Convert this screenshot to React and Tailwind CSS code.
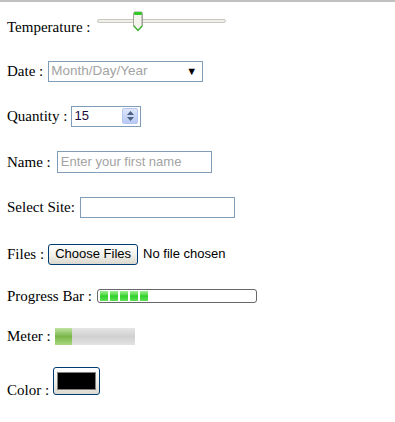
import React from "react";

const serif = { fontFamily: '"Liberation Serif", "Times New Roman", serif' };
const sans = { fontFamily: '"Liberation Sans", Arial, sans-serif' };

function Slider() {
  return (
    <div className="relative w-[129px] h-[21px] ml-[6px] mb-[12px]">
      <div className="absolute left-0 right-0 top-[8px] h-[4px] rounded-[2px] border border-[#c9c8bf] bg-[#f0efe9]" />
      <svg className="absolute left-[35px] top-0" width="12" height="21" viewBox="0 0 12 21">
        <path d="M1.5 2.5 Q1.5 1 3 1 H9 Q10.5 1 10.5 2.5 V14.5 L6 19.5 L1.5 14.5 Z" fill="#f4f3ee" stroke="#a2a39a" />
        <rect x="2" y="1" width="8" height="3" fill="#35c72a" rx="1" />
        <path d="M1.5 14.5 L6 19.5 L10.5 14.5" fill="none" stroke="#3cb12f" strokeWidth="1.3" />
        <rect x="9" y="4" width="1" height="10" fill="#c8c7bd" />
      </svg>
    </div>
  );
}

function Row({ className = "", children }) {
  return <div className={"flex items-center h-[22px] " + className}>{children}</div>;
}

export default function App() {
  return (
    <div className="w-[395px] h-[422px] bg-white border-t-2 border-[#c0c0c0] text-[15px] text-black" style={serif}>
      <div className="pl-[7px] flex flex-col">
        <Row className="mt-[14px]">
          <span>Temperature :</span>
          <Slider />
        </Row>

        <Row className="mt-[22px]">
          <span>Date :</span>
          <div
            className="ml-[5px] w-[155px] h-[21px] border border-[#7f9db9] flex items-center pl-[2px] pr-[5px] justify-between text-[13.5px] text-[#a3a3a3]"
            style={sans}
          >
            <span>Month/Day/Year</span>
            <span className="text-black text-[11px]">▼</span>
          </div>
        </Row>

        <Row className="mt-[23px]">
          <span>Quantity :</span>
          <div
            className="ml-[4px] w-[70px] h-[21px] border border-[#7f9db9] flex items-center pl-[2px] pr-[2px] justify-between text-[13px] text-[#1a0a3a]"
            style={sans}
          >
            <span>15</span>
            <div className="w-[16px] h-[16px] rounded-[2px] border border-[#b5c6ef] bg-gradient-to-b from-[#dde6fb] to-[#b8c9f3] flex flex-col items-center justify-center gap-[2px]">
              <svg width="7" height="4" viewBox="0 0 7 4"><path d="M0 4 L3.5 0 L7 4 Z" fill="#4d6185" /></svg>
              <svg width="7" height="4" viewBox="0 0 7 4"><path d="M0 0 L3.5 4 L7 0 Z" fill="#4d6185" /></svg>
            </div>
          </div>
        </Row>

        <Row className="mt-[24px]">
          <span>Name :</span>
          <div
            className="ml-[6px] w-[155px] h-[22px] border border-[#7f9db9] flex items-center pl-[3px] text-[13px] text-[#a3a3a3]"
            style={sans}
          >
            Enter your first name
          </div>
        </Row>

        <Row className="mt-[23px]">
          <span>Select Site:</span>
          <div className="ml-[5px] w-[155px] h-[21px] border border-[#7f9db9]" />
        </Row>

        <Row className="mt-[25px]">
          <span>Files :</span>
          <div className="ml-[4px] flex items-center text-[13px]" style={sans}>
            <div className="w-[90px] h-[21px] rounded-[3px] border border-[#003c74] bg-gradient-to-b from-[#ffffff] via-[#f3f2ec] to-[#dad8ce] flex items-center justify-center">
              Choose Files
            </div>
            <span className="ml-[5px]">No file chosen</span>
          </div>
        </Row>

        <Row className="mt-[20px]">
          <span>Progress Bar :</span>
          <div className="ml-[5px] w-[160px] h-[14px] rounded-[3px] border border-[#686868] bg-white flex items-center gap-[2px] pl-[2px]">
            {[0, 1, 2, 3, 4].map((i) => (
              <div key={i} className="w-[8px] h-[10px] bg-gradient-to-b from-[#9cf08f] via-[#2fd12a] to-[#5ee055]" />
            ))}
          </div>
        </Row>

        <Row className="mt-[18px]">
          <span>Meter :</span>
          <div className="ml-[4px] w-[80px] h-[17px] bg-gradient-to-b from-[#e6e6e6] via-[#d0d0d0] to-[#e3e3e3] flex">
            <div className="w-[17px] h-full bg-gradient-to-b from-[#c0e4a0] via-[#7ab648] to-[#a8d880]" />
          </div>
        </Row>

        <Row className="mt-[32px]">
          <span>Color :</span>
          <div className="ml-[4px] mb-[18px] w-[47px] h-[28px] rounded-[3px] border border-[#003c74] bg-gradient-to-b from-[#ffffff] via-[#f1f0ea] to-[#dcdad0] flex items-center justify-center">
            <div className="w-[39px] h-[18px] bg-black border border-[#808080]" />
          </div>
        </Row>
      </div>
    </div>
  );
}
